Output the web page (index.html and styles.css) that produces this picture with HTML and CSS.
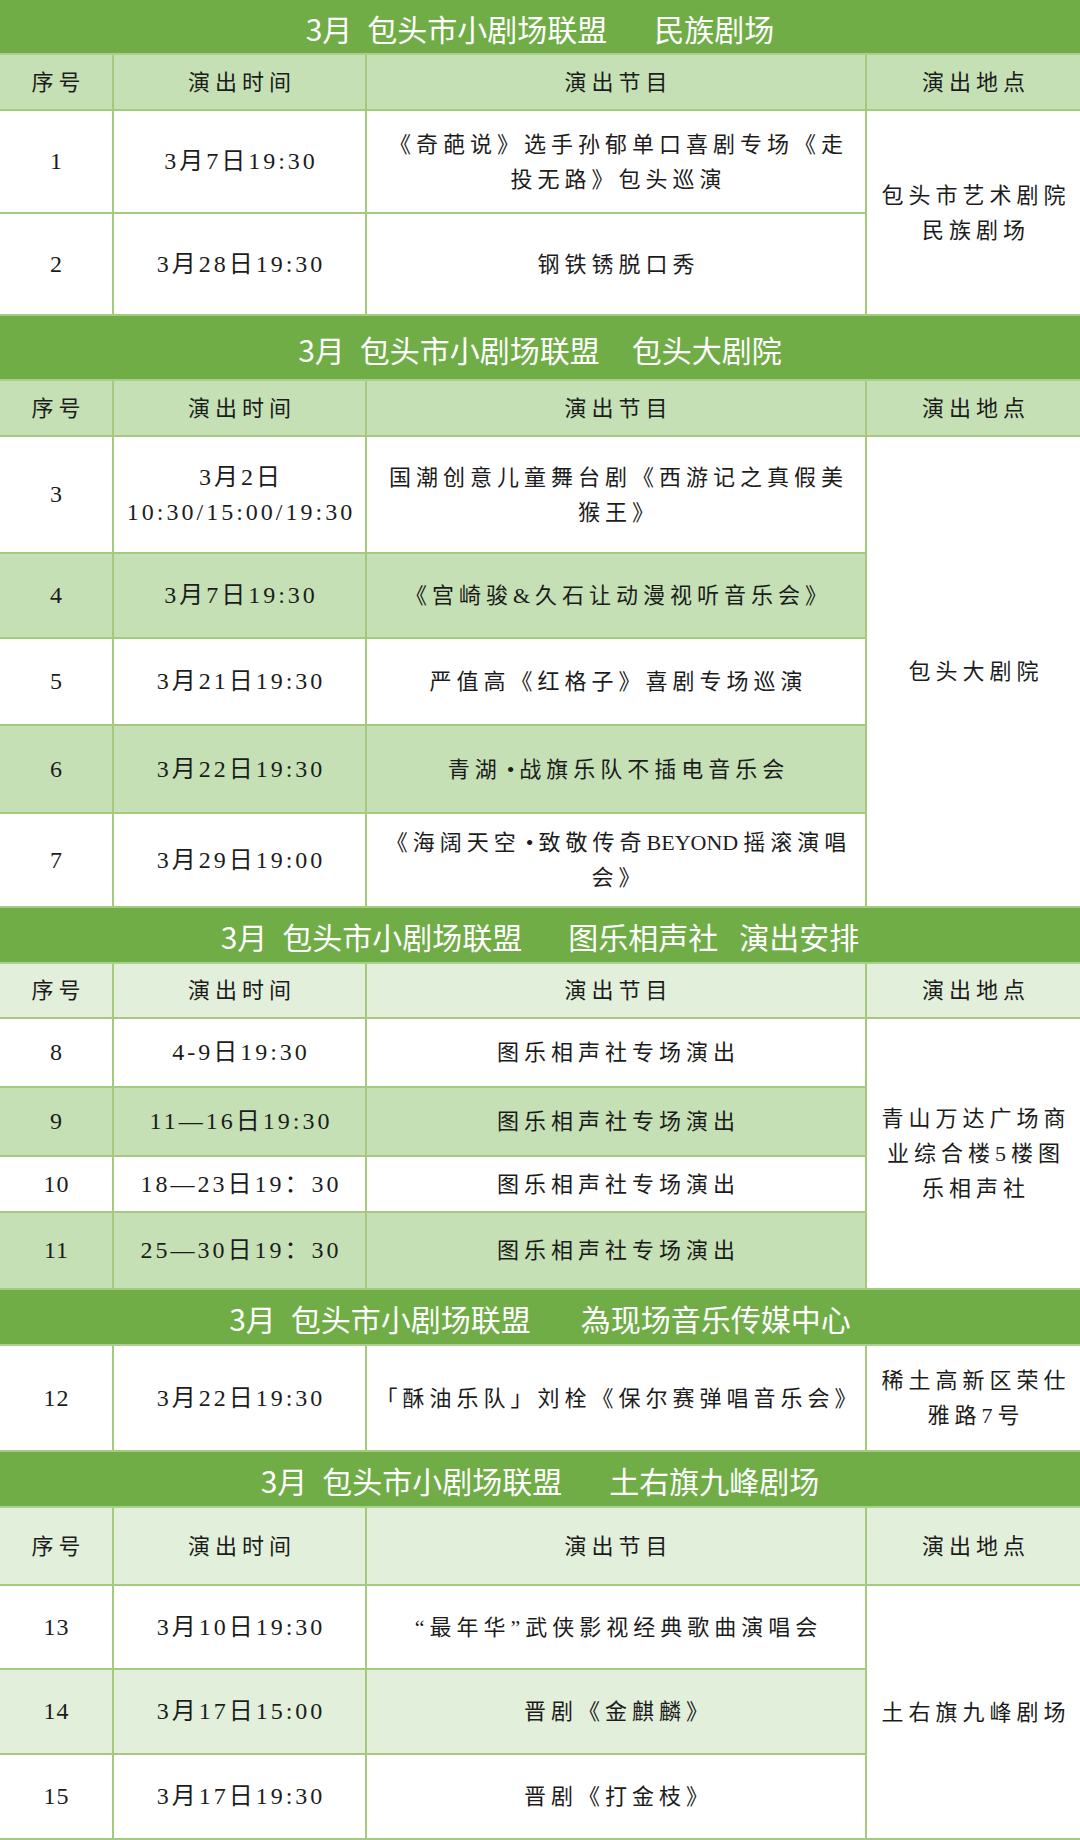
FILE: index.html
```html
<!DOCTYPE html>
<html lang="zh-CN">
<head>
<meta charset="utf-8">
<title>3月 包头市小剧场联盟 演出安排</title>
<link rel="stylesheet" href="styles.css">
</head>
<body>
<div class="sheet">

  <section class="block b1">
    <div class="title"><span>3月</span><span class="g1">包头市小剧场联盟</span><span class="t1">民族剧场</span></div>
    <div class="cell hd">序号</div>
    <div class="cell hd">演出时间</div>
    <div class="cell hd">演出节目</div>
    <div class="cell hd end">演出地点</div>

    <div class="cell num">1</div>
    <div class="cell time">3月7日19:30</div>
    <div class="cell"><span class="in">《奇葩说》选手孙郁单口喜剧专场《走<br>投无路》包头巡演</span></div>
    <div class="cell end span2"><span class="in">包头市艺术剧院<br>民族剧场</span></div>

    <div class="cell num">2</div>
    <div class="cell time">3月28日19:30</div>
    <div class="cell">钢铁锈脱口秀</div>
  </section>

  <section class="block b2">
    <div class="title"><span>3月</span><span class="g1">包头市小剧场联盟</span><span class="t2">包头大剧院</span></div>
    <div class="cell hd">序号</div>
    <div class="cell hd">演出时间</div>
    <div class="cell hd">演出节目</div>
    <div class="cell hd end">演出地点</div>

    <div class="cell num">3</div>
    <div class="cell time"><span class="in">3月2日<br>10:30/15:00/19:30</span></div>
    <div class="cell"><span class="in">国潮创意儿童舞台剧《西游记之真假美<br>猴王》</span></div>
    <div class="cell end span5">包头大剧院</div>

    <div class="cell num alt">4</div>
    <div class="cell time alt">3月7日19:30</div>
    <div class="cell alt">《宫崎骏&amp;久石让动漫视听音乐会》</div>

    <div class="cell num">5</div>
    <div class="cell time">3月21日19:30</div>
    <div class="cell">严值高《红格子》喜剧专场巡演</div>

    <div class="cell num alt">6</div>
    <div class="cell time alt">3月22日19:30</div>
    <div class="cell alt"><span class="in">青湖<span class="dot">•</span>战旗乐队不插电音乐会</span></div>

    <div class="cell num">7</div>
    <div class="cell time">3月29日19:00</div>
    <div class="cell"><span class="in">《海阔天空<span class="dot">•</span>致敬传奇<span class="latin">BEYON</span>D摇滚演唱<br>会》</span></div>
  </section>

  <section class="block b3">
    <div class="title"><span>3月</span><span class="g1">包头市小剧场联盟</span><span class="t3">图乐相声社</span><span class="t3b">演出安排</span></div>
    <div class="cell hd-light">序号</div>
    <div class="cell hd-light">演出时间</div>
    <div class="cell hd-light">演出节目</div>
    <div class="cell hd-light end">演出地点</div>

    <div class="cell num">8</div>
    <div class="cell time">4-9日19:30</div>
    <div class="cell">图乐相声社专场演出</div>
    <div class="cell end span4"><span class="in">青山万达广场商<br>业综合楼5楼图<br>乐相声社</span></div>

    <div class="cell num alt">9</div>
    <div class="cell time alt">11—16日19:30</div>
    <div class="cell alt">图乐相声社专场演出</div>

    <div class="cell num">10</div>
    <div class="cell time">18—23日19：30</div>
    <div class="cell">图乐相声社专场演出</div>

    <div class="cell num alt">11</div>
    <div class="cell time alt">25—30日19：30</div>
    <div class="cell alt">图乐相声社专场演出</div>
  </section>

  <section class="block b4">
    <div class="title"><span>3月</span><span class="g1">包头市小剧场联盟</span><span class="t4">為现场音乐传媒中心</span></div>
    <div class="cell num">12</div>
    <div class="cell time">3月22日19:30</div>
    <div class="cell">「酥油乐队」刘栓《保尔赛弹唱音乐会》</div>
    <div class="cell end"><span class="in">稀土高新区荣仕<br>雅路7号</span></div>
  </section>

  <section class="block b5">
    <div class="title"><span>3月</span><span class="g1">包头市小剧场联盟</span><span class="t5">土右旗九峰剧场</span></div>
    <div class="cell hd-light">序号</div>
    <div class="cell hd-light">演出时间</div>
    <div class="cell hd-light">演出节目</div>
    <div class="cell hd-light end">演出地点</div>

    <div class="cell num">13</div>
    <div class="cell time">3月10日19:30</div>
    <div class="cell">“最年华”武侠影视经典歌曲演唱会</div>
    <div class="cell end span3">土右旗九峰剧场</div>

    <div class="cell num alt-light">14</div>
    <div class="cell time alt-light">3月17日15:00</div>
    <div class="cell alt-light">晋剧《金麒麟》</div>

    <div class="cell num">15</div>
    <div class="cell time">3月17日19:30</div>
    <div class="cell">晋剧《打金枝》</div>
  </section>

</div>
</body>
</html>
```

FILE: styles.css
```css
* {
  box-sizing: border-box;
}

html, body {
  margin: 0;
  padding: 0;
  background: #ffffff;
}

.sheet {
  width: 1080px;
  height: 1840px;
  overflow: hidden;
}

.block {
  display: grid;
  grid-template-columns: 114px 253px 500px 213px;
}

.b1 { grid-template-rows: 55px 56px 103px 102px; }
.b2 { grid-template-rows: 65px 56px 117px 85px 87px 88px 94px; }
.b3 { grid-template-rows: 56px 55px 69px 69px 56px 77px; }
.b4 { grid-template-rows: 56px 106px; }
.b5 { grid-template-rows: 56px 78px 84px 85px 85px; }

.title {
  grid-column: 1 / -1;
  display: flex;
  align-items: center;
  justify-content: center;
  background: #70ad47;
  color: #ffffff;
  font-family: "Noto Sans CJK SC", "Noto Sans", sans-serif;
  font-size: 30px;
  line-height: 1;
  white-space: nowrap;
  border-bottom: 2px solid #a9d08e;
  padding-top: 2px;
}

.title .g1 { margin-left: 15px; }
.title .t1 { margin-left: 47px; }
.title .t2 { margin-left: 32px; }
.title .t3 { margin-left: 46px; }
.title .t3b { margin-left: 21px; }
.title .t4 { margin-left: 50px; }
.title .t5 { margin-left: 47px; }

.cell {
  display: flex;
  align-items: center;
  justify-content: center;
  text-align: center;
  padding-left: 5px;
  border-right: 2px solid #a6ca7d;
  border-bottom: 2px solid #a6ca7d;
  font-family: "Liberation Serif", "Noto Sans CJK SC", serif;
  font-size: 22px;
  letter-spacing: 5px;
  line-height: 35px;
  color: #1c1c1c;
  white-space: nowrap;
  background: #ffffff;
}

.in {
  display: block;
}

.cell.num {
  font-size: 24px;
  letter-spacing: 1px;
  padding-left: 1px;
}

.cell.time {
  font-size: 24px;
  letter-spacing: 3px;
  padding-left: 3px;
}

.cell.end {
  border-right: none;
}

.hd {
  background: #c5e0b4;
}

.hd-light {
  background: #e2efda;
}

.alt {
  background: #c5e0b4;
}

.alt-light {
  background: #e2efda;
}

.span2 { grid-row: span 2; }
.span3 { grid-row: span 3; }
.span4 { grid-row: span 4; }
.span5 { grid-row: span 5; }

.dot {
  font-family: "Liberation Serif", serif;
  margin-left: 5px;
}

.latin {
  letter-spacing: 0;
}
```
